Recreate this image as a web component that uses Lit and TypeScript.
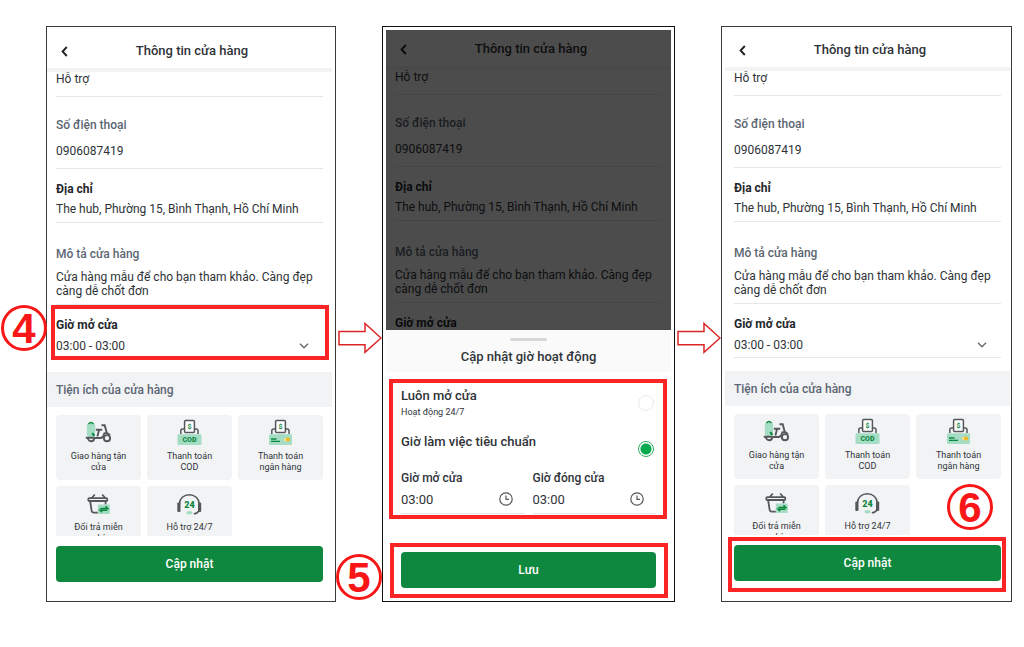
import { LitElement, html, svg, css, nothing } from "lit";
import { customElement, property } from "lit/decorators.js";

const base = css`
  *,
  *::before,
  *::after {
    box-sizing: border-box;
  }
  :host {
    display: block;
    font-family: Roboto, "Noto Sans", sans-serif;
    color: #2f3338;
  }
  button,
  input,
  select,
  textarea {
    font: inherit;
    color: inherit;
    margin: 0;
    padding: 0;
    border: 0;
    background: none;
    outline: none;
    appearance: none;
    border-radius: 0;
  }
  .primary {
    display: block;
    width: 100%;
    height: 36px;
    border-radius: 4px;
    background: #0f883f;
    color: #fff;
    font-size: 12px;
    font-weight: 500;
    text-align: center;
  }
  .anchor {
    position: relative;
  }
  .mark {
    position: absolute;
    border: 4px solid #fb2525;
    pointer-events: none;
    z-index: 2;
  }
  .badge {
    position: absolute;
    z-index: 3;
    width: 46px;
    height: 46px;
    border: 3px solid #f81616;
    border-radius: 50%;
    color: #f81616;
    font: 700 42px/42px "Liberation Sans", Arial, sans-serif;
    text-align: center;
  }
`;

const tray = svg`
  <path d="M4.800 15v-3.200q0-1.800 1.800-1.800h2M22 15v-3.200q0-1.800-1.800-1.800h-1.800" fill="none" stroke="#55585b" stroke-width="1.500"/>
  <rect x="8.600" y="1.500" width="9.800" height="12" rx="1" fill="#fff" stroke="#55585b" stroke-width="1.500"/>
  <text x="13.500" y="10" font-size="7" font-weight="700" fill="#0f883f" text-anchor="middle">$</text>
`;

const icons = {
  scooter: svg`
    <rect x="1.800" y="4" width="8.400" height="14" rx="3" fill="#a5dcc4"/>
    <path d="M3.500 5q2.500-2.800 5 0" fill="none" stroke="#0f883f" stroke-width="1.500"/>
    <path d="M7.300 14l2 3" stroke="#0f883f" stroke-width="2.200"/>
    <g fill="none" stroke="#55585b" stroke-width="1.900">
      <path d="M3 19a3.100 3.100 0 1 0 6.200.2"/>
      <circle cx="22" cy="19.200" r="3.100"/>
      <path d="M.8 18.800h8.600M10.800 10.800h6.400M14 11l-1.600 6.500M9.500 19h6.400q2.600-.4 3.200-4.400M16.500 6.200h3.200l2 7.600M18.700 14.600q4-1.600 6.200 1.600"/>
    </g>`,
  cod: svg`${tray}
    <rect x="1.500" y="15.300" width="24" height="10.700" rx="1.200" fill="#a5dcc4"/>
    <text x="13.500" y="23.400" font-size="7" font-weight="900" fill="#0f883f" text-anchor="middle">COD</text>`,
  bank: svg`${tray}
    <rect x="2" y="15.300" width="23" height="10.700" rx="1.200" fill="#a5dcc4"/>
    <path d="M4 20h5.500M4 22.300h9" stroke="#0f883f" stroke-width="1.300"/>
    <circle cx="18.800" cy="20.600" r="1.900" fill="#f6dd8c"/>
    <circle cx="21" cy="20.600" r="2" fill="#f5b71f"/>`,
  basket: svg`
    <g fill="none" stroke="#55585b" stroke-width="1.800">
      <path d="M9.800 4.500l-3 3.500M17.200 4.500l3 3.500"/>
      <rect x="3.300" y="8.200" width="19" height="2.800" rx="1"/>
      <path d="M5.200 11.500l1.400 9.200q.3 2 2.300 2h4M20.800 11.500l-.4 3"/>
    </g>
    <rect x="12.800" y="14.500" width="12" height="9.500" rx="1" fill="#a5dcc4"/>
    <path d="M15.200 18.400h7.500l-2.200-2M22.500 20.200h-7.500l2.200 2" fill="none" stroke="#0f883f" stroke-width="1.500"/>`,
  support: svg`
    <g fill="none" stroke="#55585b" stroke-width="1.600">
      <path d="M3.500 13.500a9.800 8.800 0 0 1 19.600 0"/>
      <path d="M22.800 21q-1.500 2.600-5 2.800"/>
    </g>
    <rect x="1.300" y="12.400" width="3.200" height="9.600" rx="1" fill="#55585b"/>
    <rect x="22" y="12.400" width="3.200" height="9.600" rx="1" fill="#55585b"/>
    <ellipse cx="13.500" cy="22.800" rx="3" ry="1.700" fill="#a5dcc4"/>
    <text x="13.400" y="18" font-size="9" font-weight="900" fill="#0f883f" text-anchor="middle">24</text>`,
};

const utilities: { icon: keyof typeof icons; name: string }[] = [
  { icon: "scooter", name: "Giao hàng tận cửa" },
  { icon: "cod", name: "Thanh toán COD" },
  { icon: "bank", name: "Thanh toán ngân hàng" },
  { icon: "basket", name: "Đổi trả miễn phí" },
  { icon: "support", name: "Hỗ trợ 24/7" },
];

@customElement("store-info")
class StoreInfo extends LitElement {
  /** Which part of the form the guide points at. */
  @property() highlight: "hours" | "submit" | "" = "";

  static styles = [
    base,
    css`
      .bar {
        display: grid;
        grid-template-columns: 24px 1fr 24px;
        align-items: center;
        height: 40px;
        padding: 2px 3px 0 8px;
        border-bottom: 4px solid #f2f3f5;
      }
      .back {
        display: grid;
        place-items: center start;
        height: 24px;
        padding-left: 6px;
      }
      .title {
        margin: 0;
        font-size: 13px;
        line-height: 16px;
        font-weight: 500;
        text-align: center;
      }
      .form {
        padding: 0 9px;
      }
      .field {
        display: grid;
        border-bottom: 1px solid #e3e6ea;
        font-size: 12px;
      }
      .name {
        line-height: 16px;
        font-weight: 500;
        color: #5b6672;
      }
      .strong {
        font-weight: 700;
        color: #24272b;
      }
      .value {
        display: block;
        width: 100%;
        height: 14px;
        line-height: 14px;
      }
      .text {
        height: 28px;
        resize: none;
        overflow: hidden;
      }
      .store {
        padding-bottom: 10px;
      }
      .phone {
        padding: 20px 0 10px;
        gap: 11px;
      }
      .address {
        padding: 12px 0 6px;
        gap: 5px;
      }
      .about {
        padding: 23px 0 6px;
        gap: 8px;
      }
      .hours {
        padding: 12px 0 5px;
        gap: 6px;
      }
      .pick {
        display: grid;
        grid-template-columns: 1fr 10px;
        align-items: center;
        padding-right: 14px;
      }
      .section {
        margin: 13px 0 0;
        padding: 1px 9px 0;
        font-size: 12px;
        line-height: 34px;
        font-weight: 500;
        color: #5b6672;
        background: #f2f3f5;
      }
      .list {
        display: grid;
        grid-template-columns: repeat(3, 1fr);
        grid-auto-rows: 65px;
        gap: 6px;
        height: 121px;
        margin: 8px 9px 10px;
        padding: 0;
        overflow: hidden;
        list-style: none;
      }
      .tile {
        display: flex;
        flex-direction: column;
        align-items: center;
        gap: 6px;
        padding: 4px 13px 0;
        border-radius: 4px;
        background: #f2f3f5;
        font-size: 9px;
        line-height: 11px;
        text-align: center;
      }
      .foot {
        padding: 0 9px 19px;
      }
      .mark-hours {
        inset: 0 -6px -1px -5px;
      }
      .badge-hours {
        top: 0;
        left: -55px;
      }
      .mark-submit {
        inset: -8px -5px -11px -6px;
      }
      .badge-submit {
        top: -61px;
        right: 8px;
      }
    `,
  ];

  render() {
    return html`
      <header class="bar">
        <button class="back" aria-label="Quay lại">
          <svg width="7" height="11" viewBox="0 0 7 11">
            <path d="M5.800 1L1.600 5.500l4.200 4.500" fill="none" stroke="#222" stroke-width="1.900" />
          </svg>
        </button>
        <h1 class="title">Thông tin cửa hàng</h1>
      </header>
      <div class="form">
        <div class="field store">
          <input class="value" aria-label="Tên cửa hàng" .value=${"Hỗ trợ"} />
        </div>
        <label class="field phone">
          <span class="name">Số điện thoại</span>
          <input class="value" type="tel" .value=${"0906087419"} />
        </label>
        <label class="field address">
          <span class="name strong">Địa chỉ</span>
          <input class="value" .value=${"The hub, Phường 15, Bình Thạnh, Hồ Chí Minh"} />
        </label>
        <label class="field about">
          <span class="name">Mô tả cửa hàng</span>
          <textarea
            class="value text"
            .value=${"Cửa hàng mẫu để cho bạn tham khảo. Càng đẹp càng dễ chốt đơn"}
          ></textarea>
        </label>
        <div class="anchor">
          <label class="field hours">
            <span class="name strong">Giờ mở cửa</span>
            <span class="pick">
              <select class="value">
                <option>03:00 - 03:00</option>
              </select>
              <svg width="10" height="6" viewBox="0 0 10 6">
                <path d="M1 .8l4 4 4-4" fill="none" stroke="#666b70" stroke-width="1.400" />
              </svg>
            </span>
          </label>
          ${this.highlight === "hours"
            ? html`<span class="mark mark-hours"></span><span class="badge badge-hours">4</span>`
            : nothing}
        </div>
      </div>
      <h2 class="section">Tiện ích của cửa hàng</h2>
      <ul class="list">
        ${utilities.map(
          (u) => html`<li class="tile">
            <svg width="27" height="26" viewBox="0 0 27 26">${icons[u.icon]}</svg>
            <span>${u.name}</span>
          </li>`,
        )}
      </ul>
      <div class="foot">
        <div class="anchor">
          <button class="primary">Cập nhật</button>
          ${this.highlight === "submit"
            ? html`<span class="mark mark-submit"></span><span class="badge badge-submit">6</span>`
            : nothing}
        </div>
      </div>
    `;
  }
}

@customElement("hours-sheet")
class HoursSheet extends LitElement {
  static styles = [
    base,
    css`
      :host {
        background: #fff;
      }
      .head {
        display: grid;
        justify-items: center;
        gap: 8px;
        padding: 8px 0 7px;
        background: #fafafa;
      }
      .grip {
        width: 37px;
        height: 3px;
        border-radius: 2px;
        background: #d8d8d8;
      }
      .title {
        margin: 0;
        font-size: 13px;
        line-height: 16px;
        font-weight: 500;
      }
      .body {
        padding: 16px 15px 0;
      }
      .option {
        display: flex;
        justify-content: space-between;
        align-items: start;
        font-size: 13px;
        line-height: 16px;
        font-weight: 500;
        padding-right: 2px;
      }
      .standard {
        margin: 16px 0 13px;
      }
      .note {
        display: block;
        margin-top: 2px;
        font-size: 9px;
        line-height: 12px;
        font-weight: 400;
      }
      .radio {
        width: 16px;
        height: 16px;
        margin-top: 7px;
        border: 1px solid #e6eaec;
        border-radius: 50%;
      }
      .radio:checked {
        border-color: #2dae63;
        background: radial-gradient(circle, #06a94d 5px, #fff 6px);
      }
      .times {
        display: grid;
        grid-template-columns: 1fr 1fr;
        gap: 8px;
      }
      .time {
        display: grid;
        gap: 4px;
        padding-bottom: 5px;
        border-bottom: 1px solid #e3e6ea;
        font-size: 12px;
        line-height: 16px;
        font-weight: 500;
      }
      .entry {
        display: grid;
        grid-template-columns: 1fr 14px;
        align-items: center;
        padding-right: 12px;
      }
      .clock {
        width: 100%;
        min-width: 0;
        height: 18px;
        font-size: 13px;
        font-weight: 400;
      }
      .save {
        margin-top: 38px;
      }
      .mark-times {
        inset: -9px -11px -5px -12px;
      }
      .mark-save {
        inset: -9px -12px -10px -11px;
      }
      .badge-save {
        top: 2px;
        left: -65px;
      }
    `,
  ];

  private time(name: string) {
    return html`<label class="time">
      <span>${name}</span>
      <span class="entry">
        <input class="clock" .value=${"03:00"} />
        <svg width="14" height="14" viewBox="0 0 14 14" fill="none" stroke="#55585b">
          <circle cx="7" cy="7" r="6.200" stroke-width="1.200" />
          <path d="M7 3.500V7.300h3" stroke-width="1.200" />
        </svg>
      </span>
    </label>`;
  }

  render() {
    return html`
      <header class="head">
        <span class="grip"></span>
        <h2 class="title">Cập nhật giờ hoạt động</h2>
      </header>
      <div class="body">
        <div class="anchor">
          <label class="option">
            <span>Luôn mở cửa<small class="note">Hoạt động 24/7</small></span>
            <input class="radio" type="radio" name="mode" />
          </label>
          <label class="option standard">
            <span>Giờ làm việc tiêu chuẩn</span>
            <input class="radio" type="radio" name="mode" checked />
          </label>
          <div class="times">${this.time("Giờ mở cửa")} ${this.time("Giờ đóng cửa")}</div>
          <span class="mark mark-times"></span>
        </div>
        <div class="anchor save">
          <button class="primary">Lưu</button>
          <span class="mark mark-save"></span>
          <span class="badge badge-save">5</span>
        </div>
      </div>
    `;
  }
}

@customElement("app-root")
class AppRoot extends LitElement {
  static styles = [
    base,
    css`
      :host {
        min-height: 100vh;
        background: #fff;
      }
      .steps {
        display: grid;
        grid-template-columns: 290fr 46px 293fr 46px 291fr;
        padding: 26px 12px 44px 46px;
      }
      .frame {
        border: 1px solid #3a3a3a;
        background: #fff;
      }
      .first {
        padding: 5px 3px 0 0;
      }
      .second {
        padding: 3px 3px 0;
        border-color: #111;
      }
      .third {
        padding: 4px 1px 0 3px;
      }
      .screen {
        position: relative;
      }
      .shade {
        position: absolute;
        inset: 0;
        background: rgba(0, 0, 0, 0.7);
      }
      .sheet {
        position: absolute;
        inset: 300px 0 0;
      }
      .arrow {
        padding: 296px 0 0 2px;
      }
      .arrow svg {
        display: block;
      }
    `,
  ];

  private arrow() {
    return html`<div class="arrow">
      <svg width="44" height="32" viewBox="0 0 44 32">
        <path
          d="M1 9.500H27V1.500L43 16 27 30.300V22.800H1z"
          fill="#fff"
          stroke="#dc2626"
          stroke-width="1.500"
        />
      </svg>
    </div>`;
  }

  render() {
    return html`
      <main class="steps">
        <section class="frame first"><store-info highlight="hours"></store-info></section>
        ${this.arrow()}
        <section class="frame second">
          <div class="screen">
            <store-info inert></store-info>
            <div class="shade"></div>
            <hours-sheet class="sheet"></hours-sheet>
          </div>
        </section>
        ${this.arrow()}
        <section class="frame third"><store-info highlight="submit"></store-info></section>
      </main>
    `;
  }
}
